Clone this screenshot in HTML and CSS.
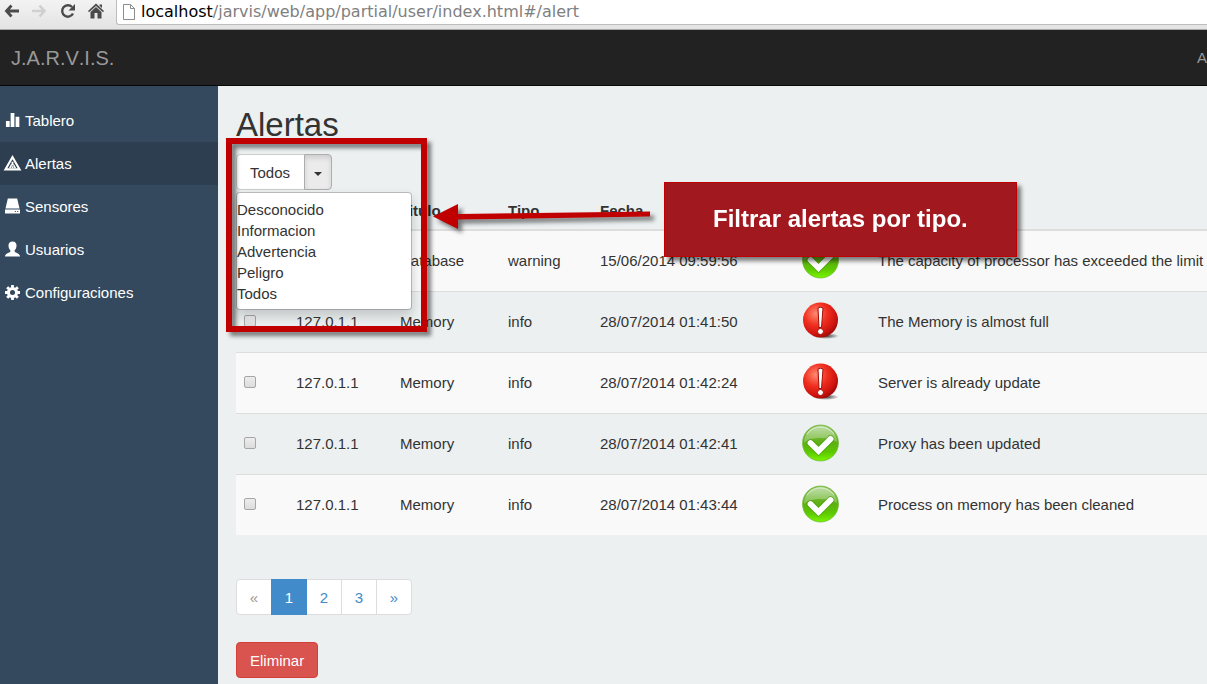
FILE: index.html
```html
<!DOCTYPE html>
<html lang="es">
<head>
<meta charset="utf-8">
<title>J.A.R.V.I.S. - Alertas</title>
<link rel="stylesheet" href="styles.css">
</head>
<body>
<svg class="defs" width="0" height="0" aria-hidden="true">
  <defs>
    <linearGradient id="green" x1="0" y1="0" x2="0" y2="1">
      <stop offset="0" stop-color="#8cc063"/><stop offset=".5" stop-color="#5db012"/><stop offset=".75" stop-color="#5cc800"/><stop offset="1" stop-color="#7af500"/>
    </linearGradient>
    <linearGradient id="gloss" x1="0" y1="0" x2="0" y2="1">
      <stop offset="0" stop-color="#fff" stop-opacity=".45"/><stop offset="1" stop-color="#fff" stop-opacity=".2"/>
    </linearGradient>
    <radialGradient id="red" cx=".36" cy=".32" r=".72">
      <stop offset="0" stop-color="#ff8a70"/><stop offset=".45" stop-color="#f03020"/><stop offset=".8" stop-color="#d01410"/><stop offset="1" stop-color="#a00a08"/>
    </radialGradient>
    <radialGradient id="shade">
      <stop offset="0" stop-color="#222" stop-opacity=".9"/><stop offset="1" stop-color="#222" stop-opacity="0"/>
    </radialGradient>
    <symbol id="ok" viewBox="0 0 38 38">
      <circle cx="18.500" cy="19" r="18" fill="url(#green)" stroke="#6fb83a" stroke-opacity=".7"/>
      <path d="M2 19a16.500 16.500 0 0 1 33-1Q29 14 18.500 14T2 19Z" fill="url(#gloss)"/>
      <path d="M5 10A16.500 16.500 0 0 1 32 10" fill="none" stroke="#e3f3d3" stroke-opacity=".8"/>
      <path d="M8.500 19 16.500 27 28.500 15" fill="none" stroke="#3f9408" stroke-width="7.500" stroke-linecap="round" stroke-opacity=".5"/>
      <path d="M8.500 19 16.500 27 28.500 15" fill="none" stroke="#fff" stroke-width="5.800" stroke-linecap="round"/>
    </symbol>
    <symbol id="err" viewBox="0 0 38 38">
      <ellipse cx="24" cy="34" rx="13" ry="3" fill="url(#shade)"/>
      <circle cx="18.500" cy="18" r="17.500" fill="url(#red)"/>
      <path d="M16 6Q18.500 4.500 21 6L19.500 25.500h-2.500Z" fill="#fff" stroke="#a30b08"/>
      <circle cx="18.500" cy="29.500" r="3" fill="#fff" stroke="#a30b08"/>
    </symbol>
  </defs>
</svg>

<div class="browser">
  <div class="browser-nav">
    <button class="tool" aria-label="Atrás"><svg viewBox="0 0 16 16"><path d="M7.500 2.500 2.500 8l5 5.500M3 8H15" fill="none" stroke="#4b4b4b" stroke-width="2.800"/></svg></button>
    <button class="tool" aria-label="Adelante" disabled><svg viewBox="0 0 16 16"><path d="M7.500 2.500l5 5.500-5 5.500M12 8H0" fill="none" stroke="#d0d0d0" stroke-width="2.600"/></svg></button>
    <button class="tool" aria-label="Recargar"><svg viewBox="0 0 16 16"><path d="M13 10.500A5.700 5.700 0 1 1 12 4" fill="none" stroke="#4b4b4b" stroke-width="2.400"/><path d="M15 1v6.500H8.500Z" fill="#4b4b4b"/></svg></button>
    <button class="tool" aria-label="Inicio"><svg viewBox="0 0 16 16"><path d="M8 .500 16 8l-1 1.200L8 3 1 9.200 0 8ZM11.500 1.500H14V5l-2.500-2.300ZM8 4l5.500 5v6.500H9.500V10h-3v5.500h-4V9Z" fill="#4b4b4b"/></svg></button>
  </div>
  <div class="address">
    <svg class="page-icon" viewBox="0 0 12 16"><path d="M.500.500h7l4 4v11H.500ZM7.500.500v4h4" fill="#fff" stroke="#8c8c8c"/></svg>
    <span class="url"><span class="host">localhost</span>/jarvis/web/app/partial/user/index.html#/alert</span>
  </div>
</div>

<header class="navbar">
  <a class="brand" href="#">J.A.R.V.I.S.</a>
  <a class="account" href="#">A</a>
</header>

<div class="layout">
  <nav class="sidebar">
    <a class="side-link" href="#"><svg viewBox="0 0 16 16"><path d="M1 8.500h4v6.500H1ZM6 0h4v15H6ZM11.300 4h4v11h-4Z"/></svg>Tablero</a>
    <a class="side-link active" href="#"><svg viewBox="0 0 16 16"><path fill-rule="evenodd" d="M8-1 17.500 15.500H-1.500ZM8 3.500 2.500 13h11Z"/><path d="M7 6h2V10H7ZM7 11h2v2H7ZM4 13l2.500-4.500 1 1L6 13ZM12 13 9.500 8.500l-1 1L10 13Z"/></svg>Alertas</a>
    <a class="side-link" href="#"><svg viewBox="0 0 16 16"><path d="M3-.500h10l2.500 10.500H.500ZM0 11.200h16v4.300H0Z"/><path d="M10.500 13.300h1.200M13 13.300h1.200" stroke="#34495e"/></svg>Sensores</a>
    <a class="side-link" href="#"><svg viewBox="0 0 16 16"><path d="M8-.500c3 0 4.300 1.800 4.300 4.300 0 2.400-1 4.200-2 5v1.500c1 1 5.500 1.700 5.700 5.200H0c.200-3.500 4.700-4.200 5.700-5.200V8.800c-1-.8-2-2.600-2-5C3.700 1.300 5-.500 8-.500Z"/></svg>Usuarios</a>
    <a class="side-link" href="#"><svg viewBox="0 0 16 16"><circle cx="8" cy="8" r="4.300" fill="none" stroke="#fff" stroke-width="3.200"/><path d="M8 0v3M8 13v3M0 8h3M13 8h3M2.300 2.300l2 2M11.700 11.700l2 2M2.300 13.700l2-2M11.700 4.300l2-2" stroke="#fff" stroke-width="3"/></svg>Configuraciones</a>
  </nav>

  <main class="content">
    <h1>Alertas</h1>
    <div class="filter">
      <button class="filter-label">Todos</button><button class="filter-toggle" aria-label="Abrir filtro" aria-expanded="true"><span class="caret"></span></button>
      <ul class="menu">
        <li><button>Desconocido</button></li>
        <li><button>Informacion</button></li>
        <li><button>Advertencia</button></li>
        <li><button>Peligro</button></li>
        <li><button>Todos</button></li>
      </ul>
    </div>

    <table class="alerts">
      <colgroup><col class="c-check"><col class="c-ip"><col class="c-title"><col class="c-type"><col class="c-date"><col class="c-state"><col></colgroup>
      <thead>
        <tr><th></th><th></th><th>Titulo</th><th>Tipo</th><th>Fecha</th><th></th><th></th></tr>
      </thead>
      <tbody>
        <tr><td><input type="checkbox" aria-label="Seleccionar alerta 1"></td><td></td><td>Database</td><td>warning</td><td>15/06/2014 09:59:56</td><td><svg class="state"><use href="#ok"/></svg></td><td>The capacity of processor has exceeded the limit</td></tr>
        <tr><td><input type="checkbox" aria-label="Seleccionar alerta 2"></td><td>127.0.1.1</td><td>Memory</td><td>info</td><td>28/07/2014 01:41:50</td><td><svg class="state"><use href="#err"/></svg></td><td>The Memory is almost full</td></tr>
        <tr><td><input type="checkbox" aria-label="Seleccionar alerta 3"></td><td>127.0.1.1</td><td>Memory</td><td>info</td><td>28/07/2014 01:42:24</td><td><svg class="state"><use href="#err"/></svg></td><td>Server is already update</td></tr>
        <tr><td><input type="checkbox" aria-label="Seleccionar alerta 4"></td><td>127.0.1.1</td><td>Memory</td><td>info</td><td>28/07/2014 01:42:41</td><td><svg class="state"><use href="#ok"/></svg></td><td>Proxy has been updated</td></tr>
        <tr><td><input type="checkbox" aria-label="Seleccionar alerta 5"></td><td>127.0.1.1</td><td>Memory</td><td>info</td><td>28/07/2014 01:43:44</td><td><svg class="state"><use href="#ok"/></svg></td><td>Process on memory has been cleaned</td></tr>
      </tbody>
    </table>

    <nav class="pages" aria-label="Páginas">
      <a class="off" href="#">«</a><a class="on" href="#">1</a><a href="#">2</a><a href="#">3</a><a href="#">»</a>
    </nav>
    <button class="delete">Eliminar</button>

    <div class="note-frame"></div>
    <svg class="note-arrow" viewBox="0 0 218 26"><path d="M0 12.500 25 0V10L217 7.500V12.500L25 15.500V25Z" fill="#c00000"/></svg>
    <div class="note">Filtrar alertas por tipo.</div>
  </main>
</div>
</body>
</html>
```
FILE: styles.css
```css
* { box-sizing: border-box; }

body {
  margin: 0;
  min-height: 100vh;
  display: flex;
  flex-direction: column;
  overflow: hidden;
  background: #ecf0f1;
  color: #333;
  font: 15px/21px "Liberation Sans", Arial, sans-serif;
}

button { font: inherit; color: inherit; margin: 0; cursor: pointer; }
a { text-decoration: none; }
.defs { position: absolute; }

.browser {
  display: flex;
  align-items: flex-start;
  height: 30px;
  background: linear-gradient(#f3f3f3, #e3e3e3);
  border-bottom: 1px solid #a9a9a9;
}
.browser-nav { display: flex; gap: 12px; padding: 3px 12px 0 4px; }
.tool { width: 16px; height: 16px; padding: 0; border: 0; background: none; }
.tool svg { display: block; width: 16px; height: 16px; }
.address {
  flex: 1;
  display: flex;
  align-items: center;
  gap: 6px;
  height: 25px;
  padding: 0 6px;
  background: #fff;
  border: 1px solid #bdbdbd;
  border-width: 0 0 1px 1px;
  border-radius: 0 0 0 3px;
}
.page-icon { width: 12px; height: 16px; }
.url { font: 16px/24px "DejaVu Sans", sans-serif; color: #808080; white-space: nowrap; }
.host { color: #000; }

.navbar {
  display: flex;
  align-items: center;
  justify-content: space-between;
  height: 56px;
  padding-left: 11px;
  background: #222;
  border-bottom: 1px solid #080808;
}
.brand, .account { color: #999; }
.brand { padding-top: 2px; font-size: 20px; font-kerning: none; }

.layout { flex: 1; display: flex; }
.sidebar { flex: 0 0 218px; padding-top: 13px; background: #34495e; }
.side-link {
  display: flex;
  align-items: center;
  gap: 5px;
  padding: 11px 5px;
  color: #fff;
}
.side-link.active { background: #2c3e50; }
.side-link svg { width: 15px; height: 15px; margin-bottom: 1px; fill: #fff; overflow: visible; }

.content { position: relative; flex: 1; min-width: 0; padding: 21px 0 6px 18px; }
h1 { margin: 0 0 11px; font-size: 33px; font-weight: 400; line-height: 36px; }

.filter { position: relative; display: flex; width: max-content; margin-bottom: 2px; }
.filter-label, .filter-toggle { height: 36px; border: 1px solid #ccc; background: #fff; }
.filter-label { padding: 0 14px 0 13px; border-radius: 4px 0 0 4px; }
.filter-toggle {
  width: 28px;
  margin-left: -1px;
  padding: 0;
  border-color: #adadad;
  border-radius: 0 4px 4px 0;
  background: #ebebeb;
  box-shadow: inset 0 3px 5px rgba(0, 0, 0, .125);
}
.caret { display: inline-block; border: 4px solid transparent; border-top-color: #333; border-bottom: 0; vertical-align: middle; }
.menu {
  position: absolute;
  z-index: 1;
  top: 100%;
  left: 0;
  width: 176px;
  margin: 2px 0 0;
  padding: 6px 0 5px;
  list-style: none;
  background: #fff;
  border: 1px solid rgba(0, 0, 0, .2);
  background-clip: padding-box;
  border-radius: 4px;
  box-shadow: 0 6px 12px rgba(0, 0, 0, .175);
}
.menu button { display: block; width: 100%; padding: 0; border: 0; background: none; text-align: left; }

.alerts { width: 100%; border-collapse: separate; border-spacing: 0; table-layout: fixed; margin-bottom: 44px; }
.c-check { width: 52px; }
.c-ip { width: 104px; }
.c-title { width: 108px; }
.c-type { width: 92px; }
.c-date { width: 202px; }
.c-state { width: 76px; }
.alerts th { height: 39px; padding: 8px; text-align: left; border-bottom: 2px solid #ddd; }
.alerts td { height: 61px; padding: 0 8px 2px; border-top: 1px solid #ddd; white-space: nowrap; }
.alerts tbody tr:first-child td { height: 60px; border-top: 0; }
.alerts tbody tr:nth-child(odd) { background: #f9f9f9; }
.alerts input {
  display: block;
  appearance: none;
  width: 12px;
  height: 12px;
  margin: 0;
  border: 1px solid #a6a6a6;
  border-radius: 2px;
  background: linear-gradient(#ededed, #dcdcdc);
}
.state { display: block; width: 38px; height: 38px; }

.pages { display: flex; width: max-content; margin-bottom: 27px; }
.pages a {
  width: 36px;
  height: 36px;
  margin-right: -1px;
  padding: 7px 0;
  border: 1px solid #ddd;
  background: #fff;
  color: #428bca;
  text-align: center;
}
.pages a:first-child { border-radius: 4px 0 0 4px; }
.pages a:last-child { margin-right: 0; border-radius: 0 4px 4px 0; }
.pages .off { color: #999; }
.pages .on { position: relative; background: #428bca; border-color: #428bca; color: #fff; }

.delete { height: 36px; padding: 0 13px; border: 1px solid #d43f3a; border-radius: 4px; background: #d9534f; color: #fff; }

.note-frame, .note-arrow, .note { position: absolute; z-index: 2; filter: drop-shadow(4px 4px 2px rgba(0, 0, 0, .5)); }
.note-frame { top: 52px; left: 8px; width: 201px; height: 194px; border: 6px solid #c00000; pointer-events: none; }
.note-arrow { top: 118px; left: 215px; width: 218px; height: 26px; overflow: visible; }
.note {
  top: 96px;
  left: 446px;
  padding: 21px 48px 23px;
  border: 1px solid #c00000;
  background: #a1181e;
  color: #fff;
  font-size: 24px;
  font-weight: 700;
  line-height: 29px;
  white-space: nowrap;
}
```
